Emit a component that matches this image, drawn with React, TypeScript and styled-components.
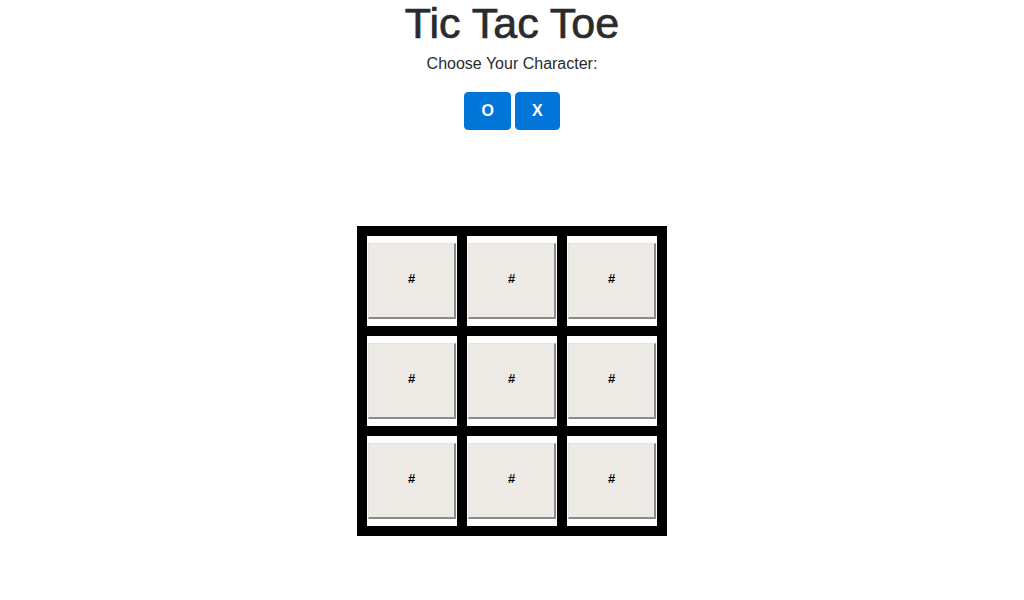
import React from "react"
import styled, { createGlobalStyle } from "styled-components"

const GlobalStyle = createGlobalStyle`
  body {
    margin: 0;
    background: #ffffff;
    font-family: "Liberation Sans", Arial, sans-serif;
    color: #292b2c;
  }
`

const Page = styled.div`
  display: flex;
  flex-direction: column;
  align-items: center;
  text-align: center;
`

const Title = styled.h1`
  margin: 0;
  font-size: 43px;
  line-height: 46px;
  font-weight: 400;
  color: #292b2c;
  -webkit-text-stroke: 0.7px #292b2c;
`

const Subtitle = styled.p`
  margin: 8px 0 18px;
  font-size: 16px;
  line-height: 20px;
`

const Choices = styled.div`
  display: flex;
  gap: 4px;
`

const ChoiceButton = styled.button`
  height: 38px;
  padding: 0 16px;
  border: 1px solid #0275d8;
  border-radius: 4px;
  background: #0275d8;
  color: #ffffff;
  font-family: "Liberation Sans", Arial, sans-serif;
  font-size: 16px;
  font-weight: 700;
  line-height: 20px;
  cursor: pointer;
`

const Board = styled.div`
  margin-top: 96px;
  display: grid;
  grid-template-columns: repeat(3, 90px);
  grid-auto-rows: 90px;
  gap: 10px;
  border: 10px solid #000000;
  background: #000000;
`

const Cell = styled.div`
  display: flex;
  align-items: center;
  justify-content: center;
  background: #ffffff;
`

const CellButton = styled.button`
  box-sizing: border-box;
  width: 88px;
  height: 76px;
  padding: 0 0 4px;
  border-style: solid;
  border-width: 1px 2px 2px 1px;
  border-color: #e4e2de #8a8a8a #8a8a8a #e4e2de;
  background: #eeebe6;
  color: #000000;
  font-family: "Liberation Sans", Arial, sans-serif;
  font-size: 13px;
  font-weight: 700;
  cursor: pointer;
`

export default function App() {
  const cells = Array.from({ length: 9 }, (_, i) => i)
  return (
    <Page>
      <GlobalStyle />
      <Title>Tic Tac Toe</Title>
      <Subtitle>Choose Your Character:</Subtitle>
      <Choices>
        <ChoiceButton>O</ChoiceButton>
        <ChoiceButton>X</ChoiceButton>
      </Choices>
      <Board>
        {cells.map((i) => (
          <Cell key={i}>
            <CellButton>#</CellButton>
          </Cell>
        ))}
      </Board>
    </Page>
  )
}
